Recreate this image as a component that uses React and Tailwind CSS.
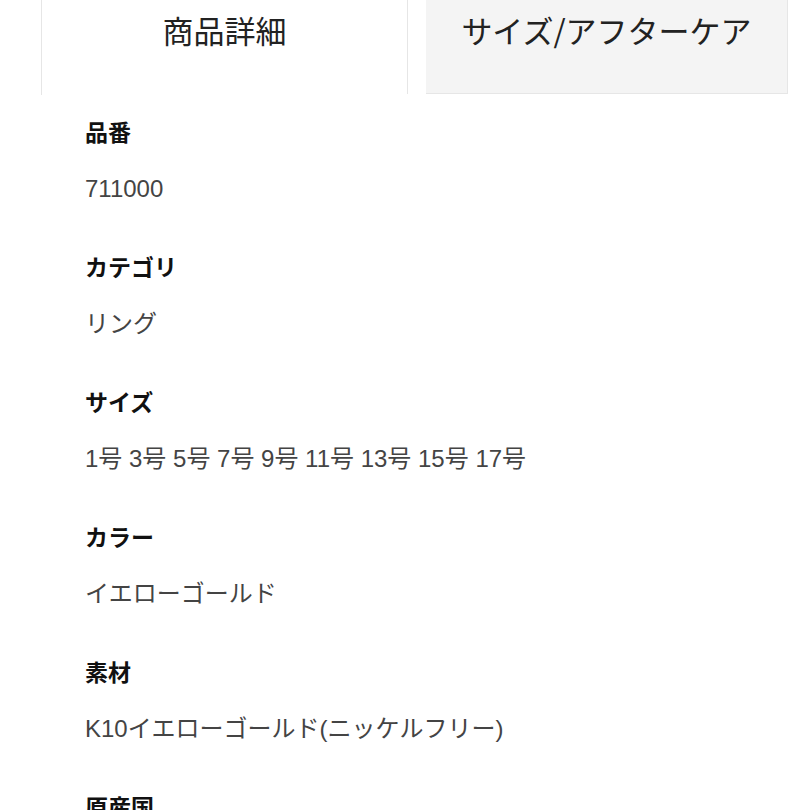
const items = [
  { label: '品番', value: '711000' },
  { label: 'カテゴリ', value: 'リング' },
  { label: 'サイズ', value: '1号 3号 5号 7号 9号 11号 13号 15号 17号' },
  { label: 'カラー', value: 'イエローゴールド' },
  { label: '素材', value: 'K10イエローゴールド(ニッケルフリー)' },
  { label: '原産国', value: '日本' },
]

const App = () => {
  return (
    <div className="w-[810px] h-[810px] overflow-hidden bg-white font-['Liberation_Sans','Noto_Sans_CJK_JP',sans-serif]">
      {/* tabs */}
      <div className="flex h-[95px] pl-[41px]">
        <div className="w-[366px] h-[95px] border-l border-[#e6e6e6] flex items-start justify-center pt-[10px]">
          <span className="text-[31px] leading-[40px] text-[#222] font-['Noto_Sans_CJK_JP',sans-serif]">商品詳細</span>
        </div>
        <div className="w-[381px] h-[94px] border-l border-[#e6e6e6] flex">
          <div className="ml-[18px] flex-1 bg-[#f4f4f4] border-r border-b border-[#e6e6e6] flex items-start justify-center pt-[10px]">
            <span className="text-[31px] leading-[40px] text-[#222] font-['Noto_Sans_CJK_JP',sans-serif]">サイズ/アフターケア</span>
          </div>
        </div>
      </div>

      {/* details */}
      <div className="pl-[85px] pt-[21px]">
        {items.map((item) => (
          <div key={item.label} className="pb-[47px]">
            <div className="h-[30px] leading-[30px] text-[23px] font-bold text-[#111] font-['Noto_Sans_CJK_JP',sans-serif]">
              {item.label}
            </div>
            <div className="mt-[28px] h-[30px] leading-[30px] text-[24px] text-[#444]">
              {item.value}
            </div>
          </div>
        ))}
      </div>
    </div>
  )
}

export default App
